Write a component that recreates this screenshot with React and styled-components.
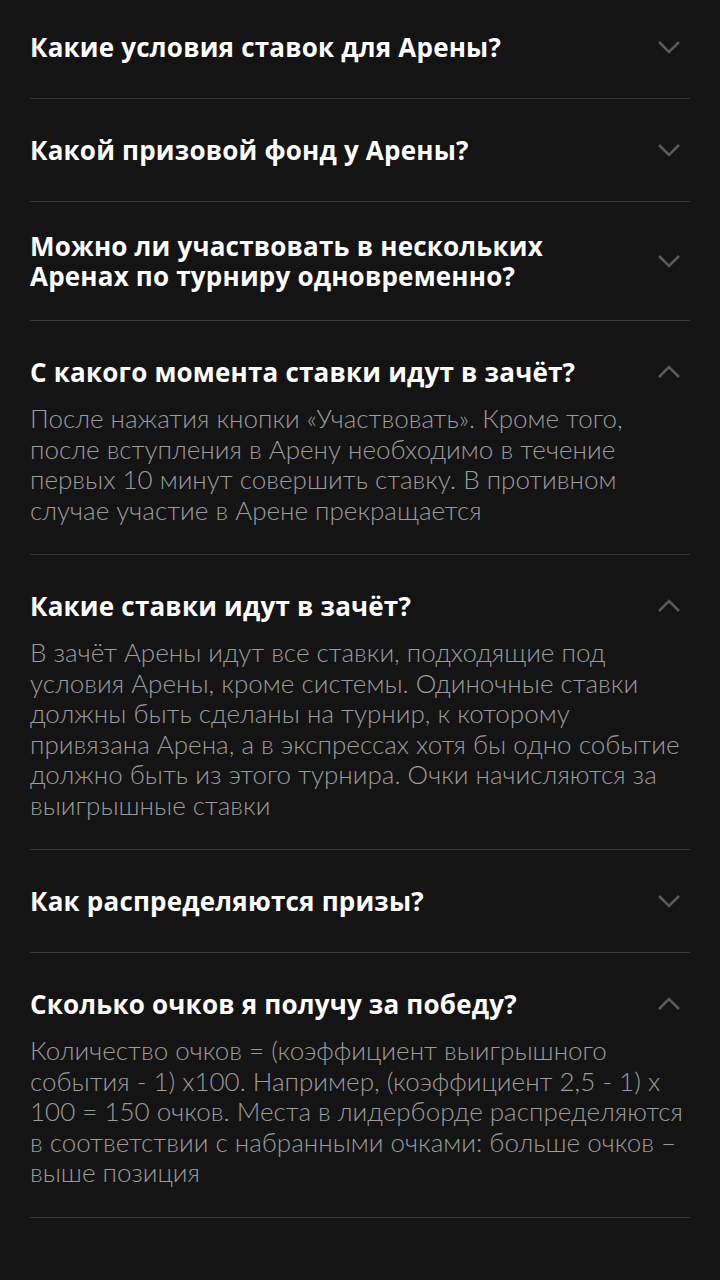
import styled, { createGlobalStyle } from 'styled-components';

const GlobalStyle = createGlobalStyle`
  html, body {
    margin: 0;
    padding: 0;
    background: #141414;
  }
  body {
    font-family: Lato, "Noto Sans", sans-serif;
  }
`;

const Page = styled.div`
  width: 720px;
  min-height: 1280px;
  background: #141414;
  padding: 0 30px;
  box-sizing: border-box;
  margin-top: -4px;
`;

const Item = styled.div`
  border-bottom: 1px solid #373737;
  padding: 29px 0;
`;

const Header = styled.div`
  display: flex;
  align-items: center;
  justify-content: space-between;
  min-height: 44px;
  gap: 24px;
`;

const Title = styled.h3`
  margin: 0;
  font-family: "Open Sans", Lato, sans-serif;
  font-weight: 700;
  font-size: 26px;
  line-height: 30px;
  letter-spacing: 0.2px;
  color: #ffffff;
  max-width: 560px;
`;

const Chevron = styled.svg`
  flex: none;
  width: 24px;
  height: 14px;
  margin-right: 9px;
  transform: ${(p) => (p.$open ? 'rotate(180deg)' : 'none')};
`;

const Answer = styled.p`
  margin: 9px 0 0;
  font-family: Lato, "Noto Sans", sans-serif;
  font-weight: 300;
  font-size: 26px;
  line-height: 30.5px;
  color: #9c9c9c;
`;

const items = [
  { q: 'Какие условия ставок для Арены?' },
  { q: 'Какой призовой фонд у Арены?' },
  { q: 'Можно ли участвовать в нескольких Аренах по турниру одновременно?' },
  {
    q: 'С какого момента ставки идут в зачёт?',
    a: 'После нажатия кнопки «Участвовать». Кроме того, после вступления в Арену необходимо в течение первых 10 минут совершить ставку. В противном случае участие в Арене прекращается',
  },
  {
    q: 'Какие ставки идут в зачёт?',
    a: 'В зачёт Арены идут все ставки, подходящие под условия Арены, кроме системы. Одиночные ставки должны быть сделаны на турнир, к которому привязана Арена, а в экспрессах хотя бы одно событие должно быть из этого турнира. Очки начисляются за выигрышные ставки',
  },
  { q: 'Как распределяются призы?' },
  {
    q: 'Сколько очков я получу за победу?',
    a: 'Количество очков = (коэффициент выигрышного события - 1) х100. Например, (коэффициент 2,5 - 1) х 100 = 150 очков. Места в лидерборде распределяются в соответствии с набранными очками: больше очков – выше позиция',
  },
];

const App = () => (
  <>
    <GlobalStyle />
    <Page>
      {items.map((item) => (
        <Item key={item.q}>
          <Header>
            <Title>{item.q}</Title>
            <Chevron $open={!!item.a} viewBox="0 0 24 14" fill="none">
              <path
                d="M2 2l10 10L22 2"
                stroke="#5a5a5a"
                strokeWidth="2.6"
                strokeLinejoin="miter"
              />
            </Chevron>
          </Header>
          {item.a && <Answer>{item.a}</Answer>}
        </Item>
      ))}
    </Page>
  </>
);

export default App;
